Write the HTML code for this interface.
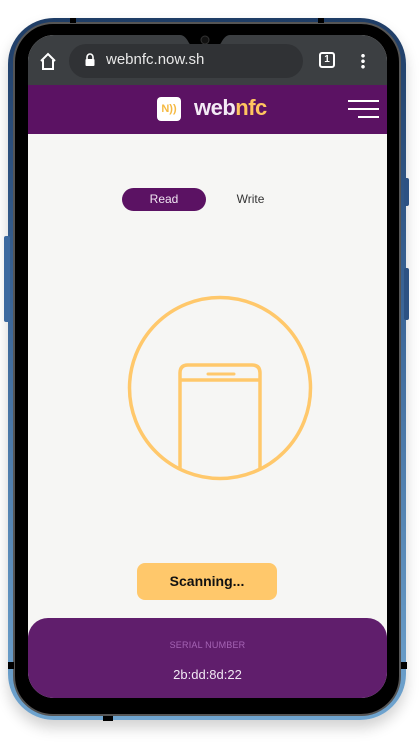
<!DOCTYPE html>
<html><head><style>
*{margin:0;padding:0;box-sizing:border-box}
body{width:419px;height:746px;background:#fff;position:relative;overflow:hidden;font-family:"Liberation Sans",sans-serif}
.frame{position:absolute;left:8px;top:18px;width:398px;height:702px;border-radius:46px;background:linear-gradient(#1f3d66,#3a6496 40%,#6fa4cf);box-shadow:0 8px 14px rgba(0,0,0,.18)}
.bez{position:absolute;left:13px;top:22px;width:388px;height:694px;border-radius:40px;background:#000;border:2px solid #555}
.screen{position:absolute;left:28px;top:35px;width:359px;height:663px;border-radius:26px;overflow:hidden;background:#f6f6f4}
.btn{position:absolute;background:#2d5283;border-radius:2px}
</style></head><body>
<div class="frame"></div>
<div class="btn" style="left:4px;top:236px;width:6px;height:86px;background:#3d6aa0"></div>
<div class="btn" style="left:404px;top:178px;width:5px;height:28px"></div>
<div class="btn" style="left:404px;top:268px;width:5px;height:52px"></div>
<div class="bez"></div>
<div style="position:absolute;left:8px;top:662px;width:6px;height:7px;background:#000"></div>
<div style="position:absolute;left:401px;top:662px;width:6px;height:7px;background:#000"></div>
<div style="position:absolute;left:103px;top:716px;width:10px;height:5px;background:#000"></div>
<div style="position:absolute;left:70px;top:18px;width:6px;height:5px;background:#000"></div>
<div style="position:absolute;left:318px;top:18px;width:6px;height:5px;background:#000"></div>
<div class="screen">
 <div style="position:absolute;left:0;top:0;width:359px;height:50px;background:#3c3f42"></div>
 <svg style="position:absolute;left:0;top:0" width="359" height="50"><path d="M150 0 L165 0 Q170 0 174 8 Q178 14 190 14 Q202 14 206 8 Q210 0 215 0 L230 0 Z" fill="#000" transform="translate(-13,0)"/><circle cx="177" cy="5" r="4" fill="#111" stroke="#333"/></svg>
 <div style="position:absolute;left:41px;top:9px;width:234px;height:34px;border-radius:17px;background:#303235"></div>
 <svg style="position:absolute;left:10px;top:17px" width="20" height="20"><path d="M3 9 L10 2 L17 9 M5 8 V17 H15 V8" fill="none" stroke="#fff" stroke-width="2"/></svg>
 <svg style="position:absolute;left:56px;top:18px" width="12" height="14"><path d="M3 6 V4 A3 3 0 0 1 9 4 V6" fill="none" stroke="#fff" stroke-width="1.6"/><rect x="1.5" y="6" width="9" height="7" rx="1" fill="#fff"/></svg>
 <div style="position:absolute;left:78px;top:16px;color:#e8e8e8;font-size:15px">webnfc.now.sh</div>
 <div style="position:absolute;left:291px;top:17px;width:16px;height:16px;border:2px solid #fff;border-radius:3px;color:#fff;font-size:10px;font-weight:bold;text-align:center;line-height:12px">1</div>
 <div style="position:absolute;left:333px;top:18px;width:4px;height:16px;background:radial-gradient(circle,#fff 1.6px,transparent 2px) 0 0/4px 5.5px"></div>
 <div style="position:absolute;left:0;top:50px;width:359px;height:49px;background:#5b1263"></div>
 <div style="position:absolute;left:129px;top:62px;width:24px;height:24px;border-radius:4px;background:#fff;color:#f5b941;font-size:11px;font-weight:bold;text-align:center;line-height:24px">N))</div>
 <div style="position:absolute;left:166px;top:60px;font-size:22px;font-weight:bold;color:#f3eaf5;letter-spacing:-0.5px">web<span style="color:#ffc55f">nfc</span></div>
 <div style="position:absolute;left:320px;top:65px;width:31px;height:2px;background:#fff"></div>
 <div style="position:absolute;left:320px;top:73px;width:31px;height:2px;background:#fff"></div>
 <div style="position:absolute;left:330px;top:81px;width:21px;height:2px;background:#fff"></div>
 <div style="position:absolute;left:94px;top:153px;width:84px;height:23px;border-radius:12px;background:#5b1263;color:#f0e6f2;font-size:12px;text-align:center;line-height:23px">Read</div>
 <div style="position:absolute;left:200px;top:153px;width:45px;color:#333;font-size:12px;text-align:center;line-height:23px">Write</div>
 <svg style="position:absolute;left:0;top:0" width="359" height="663"><g fill="none" stroke="#ffc86b" stroke-width="3.5"><circle cx="192" cy="353" r="90.5"/><path d="M152 433 V338 Q152 330 160 330 H224 Q232 330 232 338 V433 M152 345 H232"/><path d="M180 339 H206" stroke-linecap="round" stroke-width="3"/></g></svg>
 <div style="position:absolute;left:109px;top:528px;width:140px;height:37px;border-radius:8px;background:#ffc86b;color:#111;font-size:14px;font-weight:bold;text-align:center;line-height:37px">Scanning...</div>
 <div style="position:absolute;left:0;top:583px;width:359px;height:80px;border-radius:20px 20px 0 0;background:#601e6c"></div>
 <div style="position:absolute;left:0;top:605px;width:359px;text-align:center;color:#a564b5;font-size:9px;letter-spacing:.2px">SERIAL NUMBER</div>
 <div style="position:absolute;left:0;top:632px;width:359px;text-align:center;color:#f1e8f3;font-size:13px">2b:dd:8d:22</div>
</div>
</body></html>
